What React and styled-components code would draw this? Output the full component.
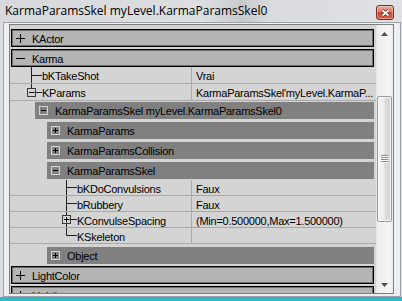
import React from "react";
import styled, { createGlobalStyle } from "styled-components";

const GlobalStyle = createGlobalStyle`
  html, body {
    margin: 0;
    padding: 0;
    background: #38b5c5;
  }
  body {
    width: 402px;
    height: 301px;
    overflow: hidden;
    font-family: "Liberation Sans", Arial, sans-serif;
  }
`;

const Window = styled.div`
  width: 402px;
  height: 297px;
  display: flex;
  flex-direction: column;
  background: #dadde1;
`;

const TitleBar = styled.div`
  height: 22px;
  flex: none;
  display: flex;
  align-items: flex-start;
  padding: 0 8px 0 5px;
  background: linear-gradient(
    90deg,
    #d6d8db 0%,
    #dcdee1 50%,
    #c8cacd 60%,
    #d9dbde 68%,
    #dfe1e4 100%
  );
`;

const Title = styled.span`
  font-family: "Open Sans", "Liberation Sans", sans-serif;
  font-size: 12px;
  line-height: 22px;
  color: #000;
  white-space: nowrap;
`;

const CloseButton = styled.div`
  margin-left: auto;
  margin-top: 5px;
  width: 18px;
  height: 15px;
  box-sizing: border-box;
  border: 1px solid #7b2d20;
  border-radius: 3px;
  background: linear-gradient(#eab0a4, #d77b69 45%, #c4472f 52%, #d66a52);
  box-shadow: inset 0 0 0 1px rgba(255, 255, 255, 0.3);
  display: flex;
  align-items: center;
  justify-content: center;
`;

const Frame = styled.div`
  flex: 1;
  min-height: 0;
  display: flex;
  margin: 0 1px 0 3px;
  padding: 1px 6px 2px 5px;
  border: 1px solid #9ea3a9;
  background: #eceef0;
`;

const Panel = styled.div`
  flex: 1;
  display: flex;
  min-width: 0;
  border: 1px solid #7f7f7f;
`;

const Tree = styled.div`
  flex: 1;
  min-width: 0;
  display: flex;
  flex-direction: column;
  overflow: hidden;
  padding-top: 4px;
  background: #d4d4d4;
`;

const Category = styled.div`
  flex: none;
  display: flex;
  align-items: center;
  box-sizing: border-box;
  height: ${(p) => (p.$top ? 18 : 17)}px;
  margin: ${(p) => p.$gap}px 2px 0 ${(p) => p.$indent}px;
  padding-left: 4px;
  background: ${(p) => (p.$top ? "#b4b4b4" : "#808080")};
  border: ${(p) => (p.$top ? "1px solid #000" : "none")};
  box-shadow: ${(p) => (p.$top ? "inset 0 0 0 1px #6e6e6e" : "none")};
`;

const Label = styled.span`
  font-size: 11px;
  letter-spacing: -0.25px;
  line-height: 13px;
  padding-top: ${(p) => p.$drop ?? 3}px;
  color: #000;
  white-space: nowrap;
`;

const CategoryLabel = styled(Label)`
  margin-left: 7px;
`;

const Row = styled.div`
  flex: none;
  display: flex;
  box-sizing: border-box;
  height: ${(p) => p.$h}px;
  margin-top: ${(p) => p.$gap || 0}px;
  border-bottom: 1px solid #a9a9a9;
  background: #d4d4d4;
`;

const NameCell = styled.div`
  width: 181px;
  flex: none;
  display: flex;
  align-items: flex-start;
  border-right: 1px solid #a9a9a9;
`;

const ValueCell = styled.div`
  flex: 1;
  min-width: 0;
  display: flex;
  align-items: flex-start;
  padding-left: 4px;
  overflow: hidden;
`;

const Gutter = styled.svg`
  flex: none;
  display: block;
`;

const ScrollBar = styled.div`
  width: 17px;
  flex: none;
  display: flex;
  flex-direction: column;
  background: linear-gradient(90deg, #e2e2e2 0, #efefef 2px, #f4f4f4 14px, #e8e8e8 17px);
`;

const ArrowButton = styled.div`
  height: 17px;
  flex: none;
  display: flex;
  align-items: center;
  justify-content: center;
`;

const Track = styled.div`
  flex: 1;
  display: flex;
  flex-direction: column;
  align-items: center;
`;

const Thumb = styled.div`
  margin-top: ${(p) => p.$offset}px;
  height: ${(p) => p.$size}px;
  width: 15px;
  flex: none;
  box-sizing: border-box;
  border: 1px solid #9b9b9b;
  border-radius: 2px;
  background: linear-gradient(90deg, #f5f5f5, #ececec 48%, #dcdcdc 52%, #d2d2d2);
  box-shadow: inset 0 0 0 1px rgba(255, 255, 255, 0.7);
  display: flex;
  align-items: center;
  justify-content: center;
`;

function PlainSign({ open }) {
  return (
    <svg width="9" height="9" viewBox="0 0 9 9">
      <path d="M0 4.5H9" stroke="#000" strokeWidth="1" />
      {!open && <path d="M4.5 0V9" stroke="#000" strokeWidth="1" />}
    </svg>
  );
}

function BoxSign({ open, frame = "#d6d6d6" }) {
  return (
    <svg width="9" height="9" viewBox="0 0 9 9">
      <rect x="0.5" y="0.5" width="8" height="8" fill="none" stroke={frame} />
      <path d="M2 4.5H7" stroke="#000" />
      {!open && <path d="M4.5 2V7" stroke="#000" />}
    </svg>
  );
}

// tree connector in front of a property name
function Branch({ width, height, kind, expand }) {
  const lx = width - 11 + 0.5;
  const my = Math.floor(height / 2) + 0.5;
  const box = kind === "open" || kind === "closed";
  const line = { stroke: "#1e1e1e", fill: "none" };
  return (
    <Gutter width={width} height={height}>
      {kind === "tee" && <path d={`M${lx} 0V${height}M${lx} ${my}H${width}`} {...line} />}
      {kind === "end" && <path d={`M${lx} 0V${my}H${width}`} {...line} />}
      {box && (
        <>
          <path d={`M${lx} 0V${my - 4}M${lx + 4} ${my}H${width}`} {...line} />
          {expand && <path d={`M${lx} ${my + 4}V${height}`} {...line} />}
          <rect x={lx - 4} y={my - 4} width="8" height="8" fill="#d4d4d4" stroke="#3a3a3a" />
          <path d={`M${lx - 2.5} ${my}H${lx + 3}`} stroke="#000" />
          {kind === "closed" && <path d={`M${lx} ${my - 2.5}V${my + 3}`} stroke="#000" />}
        </>
      )}
    </Gutter>
  );
}

function Prop({ name, value, width, kind, expand, gap, h = 16 }) {
  return (
    <Row $gap={gap} $h={h}>
      <NameCell>
        <Branch width={width} height={h - 1} kind={kind} expand={expand} />
        <Label>{name}</Label>
      </NameCell>
      <ValueCell>
        <Label>{value}</Label>
      </ValueCell>
    </Row>
  );
}

function TopCategory({ name, open, gap }) {
  return (
    <Category $top $indent={1} $gap={gap}>
      <PlainSign open={open} />
      <CategoryLabel $drop={2}>{name}</CategoryLabel>
    </Category>
  );
}

function SubCategory({ name, open, indent, gap }) {
  return (
    <Category $indent={indent} $gap={gap}>
      <BoxSign open={open} />
      <CategoryLabel $drop={2}>{name}</CategoryLabel>
    </Category>
  );
}

export default function App() {
  return (
    <>
      <GlobalStyle />
      <Window>
        <TitleBar>
          <Title>KarmaParamsSkel myLevel.KarmaParamsSkel0</Title>
          <CloseButton>
            <svg width="9" height="8" viewBox="0 0 9 8">
              <path d="M1.5 1.5L7.5 6.5M7.5 1.5L1.5 6.5" stroke="#5b1c12" strokeWidth="3.2" />
              <path d="M1.5 1.5L7.5 6.5M7.5 1.5L1.5 6.5" stroke="#fff" strokeWidth="1.8" />
            </svg>
          </CloseButton>
        </TitleBar>
        <Frame>
          <Panel>
            <Tree>
              <TopCategory name="KActor" gap={0} />
              <TopCategory name="Karma" open gap={2} />
              <Prop name="bKTakeShot" value="Vrai" width={32} kind="tee" h={17} />
              <Prop
                name="KParams"
                value="KarmaParamsSkel'myLevel.KarmaP..."
                width={32}
                kind="open"
                h={17}
              />
              <SubCategory name="KarmaParamsSkel myLevel.KarmaParamsSkel0" open indent={25} gap={1} />
              <SubCategory name="KarmaParams" indent={37} gap={3} />
              <SubCategory name="KarmaParamsCollision" indent={37} gap={3} />
              <SubCategory name="KarmaParamsSkel" open indent={37} gap={3} />
              <Prop name="bKDoConvulsions" value="Faux" width={67} kind="tee" gap={1} />
              <Prop name="bRubbery" value="Faux" width={67} kind="tee" />
              <Prop
                name="KConvulseSpacing"
                value="(Min=0.500000,Max=1.500000)"
                width={67}
                kind="closed"
                expand
              />
              <Prop name="KSkeleton" value="" width={67} kind="end" />
              <SubCategory name="Object" indent={37} gap={3} />
              <TopCategory name="LightColor" gap={2} />
              <TopCategory name="Lighting" gap={2} />
            </Tree>
            <ScrollBar>
              <ArrowButton>
                <svg width="7" height="4" viewBox="0 0 7 4">
                  <path d="M3.5 0L7 4H0Z" fill="#505050" />
                </svg>
              </ArrowButton>
              <Track>
                <Thumb $offset={54} $size={126}>
                  <svg width="7" height="8" viewBox="0 0 7 8">
                    <path d="M0 0.5H7M0 2.5H7M0 4.5H7M0 6.5H7" stroke="#8a8a8a" />
                    <path d="M0 1.5H7M0 3.5H7M0 5.5H7M0 7.5H7" stroke="#fafafa" />
                  </svg>
                </Thumb>
              </Track>
              <ArrowButton>
                <svg width="7" height="4" viewBox="0 0 7 4">
                  <path d="M0 0H7L3.5 4Z" fill="#505050" />
                </svg>
              </ArrowButton>
            </ScrollBar>
          </Panel>
        </Frame>
      </Window>
    </>
  );
}
